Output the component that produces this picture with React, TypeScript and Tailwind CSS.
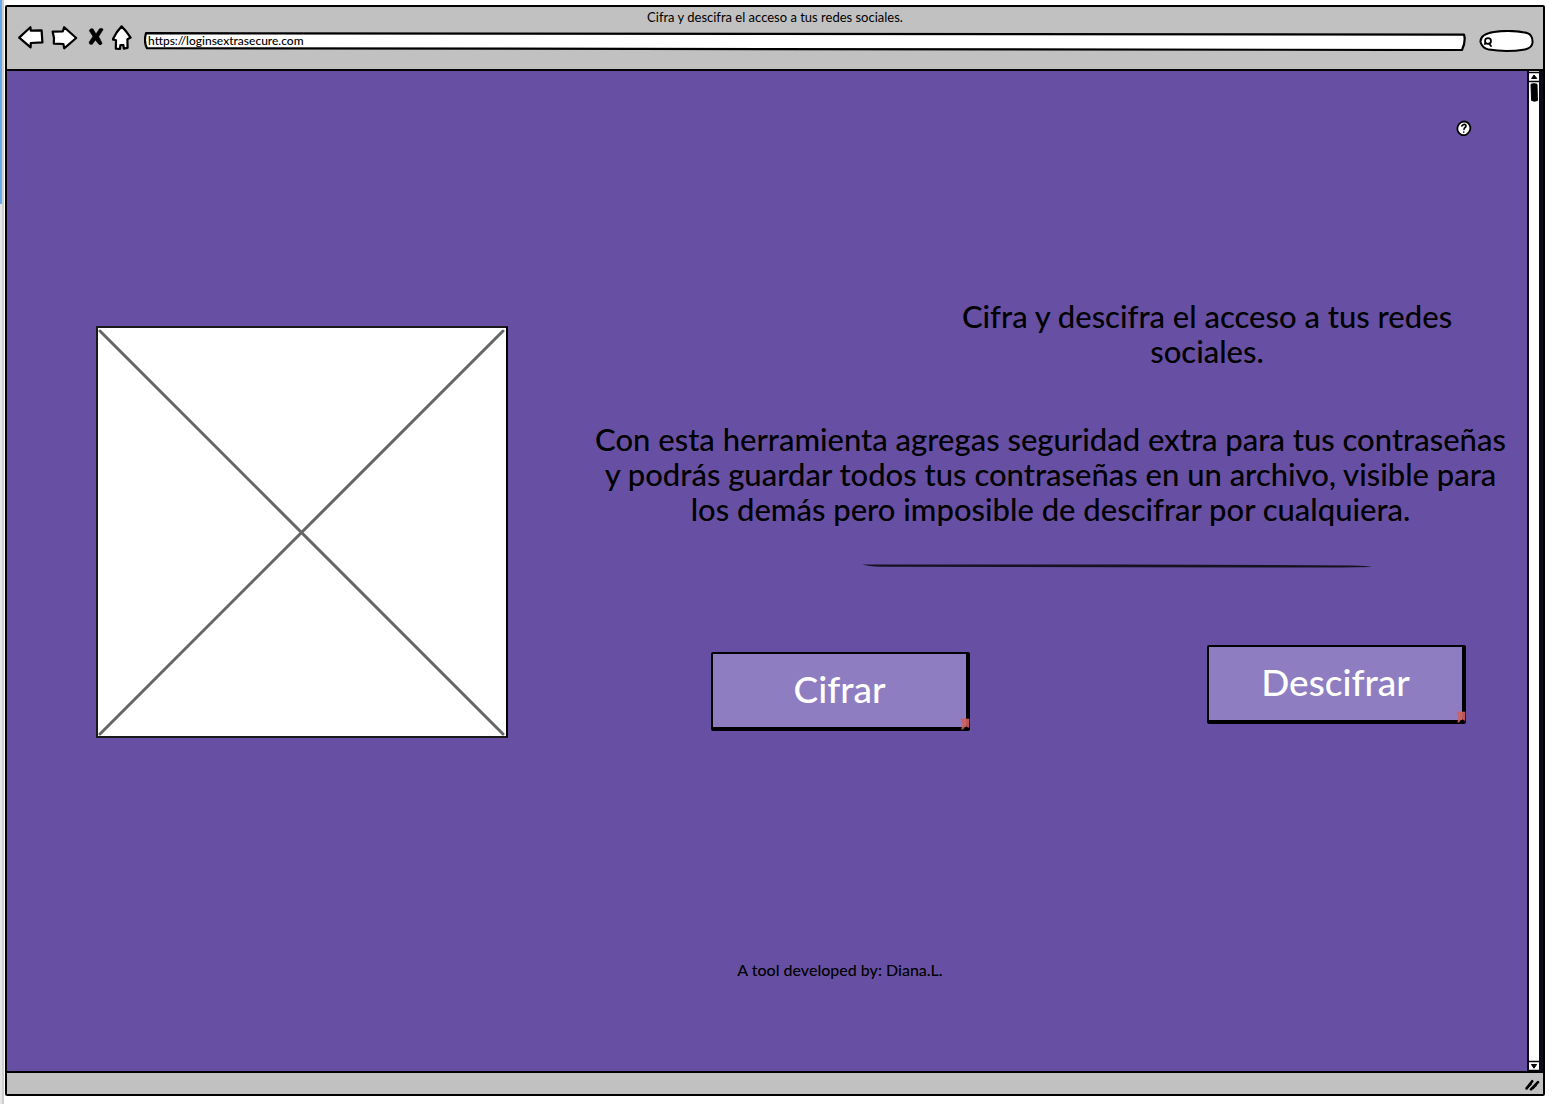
import type { ReactNode } from "react";

function SketchIcon({ label, width, children }: { label: string; width: number; children: ReactNode }) {
  return (
    <button type="button" aria-label={label} className="block shrink-0">
      <svg
        width={width}
        height="28"
        viewBox={`0 0 ${width} 28`}
        fill="white"
        stroke="black"
        strokeWidth="2.2"
        strokeLinejoin="round"
        strokeLinecap="round"
      >
        {children}
      </svg>
    </button>
  );
}

function Toolbar() {
  return (
    <header className="border-b-2 border-black bg-[#c1c1c1] pb-4">
      <h1 className="pt-[2px] text-center text-[13px] leading-[16px]">
        Cifra y descifra el acceso a tus redes sociales.
      </h1>
      <div className="flex h-7 items-center pr-[9px] pl-[11px]">
        <nav aria-label="Navegación" className="flex">
          <SketchIcon label="Atrás" width={32}>
            <path d="M1.2 12.6 12.4 2.2 12.8 5.6 23.6 5.4 24.4 17.4 12.8 18 12.6 22.4Z" />
          </SketchIcon>
          <SketchIcon label="Adelante" width={38}>
            <path d="M2.6 6.6 12.8 6.4 14.2 2.2 26.2 13 14.2 23.4 13.4 19 3.8 18.6 4 13Z" />
          </SketchIcon>
          <SketchIcon label="Detener" width={24}>
            <path
              d="M1.2 5.6Q2.4 2.8 5 3.8L8 8.8 11.4 3.8Q14.2 2.4 15.2 4.6L10.8 11.6 14.2 18.2Q13 20.8 11 19.4L7.4 15.2 4.2 19.4Q1 20.2 1 17.2L4.8 11.4Z"
              fill="black"
              strokeWidth="0.4"
            />
          </SketchIcon>
          <SketchIcon label="Inicio" width={32}>
            <path d="M9.6 1.4Q14 5.6 18.6 12.6L15.4 14.2 15.6 22.8 11.8 23.6 11.4 20.2 8.4 20 8 24 3.8 23.6 4 15.2 .8 14.4Q4.4 6.6 9.6 1.4Z" />
          </SketchIcon>
        </nav>
        <div className="relative mt-1 h-5 min-w-0 flex-1">
          <svg
            viewBox="0 0 1322 20"
            preserveAspectRatio="none"
            className="absolute inset-0 h-full w-full"
            fill="white"
            stroke="black"
            strokeWidth="2.2"
            strokeLinejoin="round"
            aria-hidden="true"
          >
            <path d="M2 2.2Q660 1.4 1320 3.6 1322 10 1318 19 660 19 3 17.2 -.5 11 2 2.2Z" />
          </svg>
          <input
            type="text"
            aria-label="Dirección"
            defaultValue="https://loginsextrasecure.com"
            className="relative block h-[18px] w-full bg-transparent px-1 text-[12px] leading-[14px] font-medium outline-none"
          />
        </div>
        <div className="relative mt-1 ml-[13px] h-[22px] w-[55px] shrink-0">
          <svg
            width="55"
            height="22"
            viewBox="0 0 55 22"
            className="absolute inset-0"
            fill="white"
            stroke="black"
            strokeWidth="2"
            strokeLinecap="round"
            aria-hidden="true"
          >
            <path d="M1.5 12Q1 4 15 2 32 -.6 48 3 53.6 4.6 53.6 12 53.4 18 46 19.4 28 22.4 10 19.6 3 18 1.5 12Z" />
            <ellipse cx="9" cy="11" rx="3" ry="2.9" strokeWidth="1.8" />
            <path d="M10 13.4 12 16M6.8 13.2 5.8 14" strokeWidth="1.8" />
          </svg>
          <input
            type="search"
            aria-label="Buscar"
            className="relative block h-full w-full bg-transparent pr-2 pl-4 text-[12px] outline-none"
          />
        </div>
      </div>
    </header>
  );
}

function Placeholder() {
  return (
    <svg viewBox="0 0 412 412" className="block w-full" role="img" aria-label="Imagen">
      <rect x="1" y="1" width="410" height="410" fill="white" stroke="#1a1a1a" strokeWidth="2" />
      <path d="M411 1V411" stroke="black" strokeWidth="2" />
      <path d="M4 5 407 408M407 5 4 408" stroke="#666" strokeWidth="3" strokeLinecap="round" />
    </svg>
  );
}

function ActionButton({ children, place }: { children: ReactNode; place: string }) {
  return (
    <button
      type="button"
      className={`relative h-[79px] w-[259px] rounded-[2px] border-2 border-r-4 border-b-4 border-black bg-[#8f7dc1] pb-[3px] text-[37px] leading-[48px] font-medium text-white ${place}`}
    >
      {children}
      <svg
        width="10"
        height="12"
        viewBox="0 0 10 12"
        className="absolute -right-[4px] -bottom-[3px]"
        fill="#d0605e"
        fillOpacity="0.9"
        aria-hidden="true"
      >
        <path d="M.4 .6 9.4 .8 9.2 10 6.2 8.2Q4 9.2 3.2 11.6L1.4 11.4 2.4 5.4Z" />
      </svg>
    </button>
  );
}

function Scrollbar() {
  return (
    <div aria-hidden="true" className="flex w-[16px] shrink-0 flex-col border-r-4 border-l-2 border-[#0d0b18] bg-white">
      <svg width="10" height="32" viewBox="0 0 10 32" stroke="black">
        <path d="M0 1.5H10M0 10.5H10" strokeWidth="1.6" />
        <path d="M2.6 7.5 5 4 7.8 7.5Z" />
        <path d="M2 13.2Q5 12.2 8 13.2L8.4 29.6Q5 30.8 2.6 29.4Z" />
      </svg>
      <svg width="10" height="12" viewBox="0 0 10 12" className="mt-auto" stroke="black">
        <path d="M0 2.5H10M0 11.5H10" strokeWidth="1.6" />
        <path d="M2.4 5.5H7.6L5 9.2Z" />
      </svg>
    </div>
  );
}

export default function App() {
  return (
    <div className="flex min-h-screen bg-white font-['Lato',sans-serif] text-black">
      <div aria-hidden="true" className="flex w-[5px] shrink-0">
        <div className="flex w-[2px] flex-col bg-[#e6e6e6]">
          <div className="h-[204px] bg-[#67aaea]" />
        </div>
        <div className="w-[2px] bg-[#cfcfcf]" />
      </div>
      <div className="mt-[5px] mr-[11px] mb-2 flex flex-1 flex-col rounded-[2px] border-2 border-black">
        <Toolbar />
        <div className="flex flex-1">
          <main className="flex min-w-0 flex-1 flex-col bg-[#6750a4]">
            <div className="flex justify-end pt-[49px] pr-[55px]">
              <button type="button" aria-label="Ayuda" className="block">
                <svg width="16" height="16" viewBox="0 0 16 16" fill="white" stroke="black" strokeLinecap="round">
                  <ellipse cx="8" cy="8.4" rx="6.4" ry="6.9" strokeWidth="1.8" transform="rotate(20 8 8)" />
                  <path d="M5.8 6Q7.8 3.4 9.8 5 10.6 6.8 8.4 8L8 9.4M7.8 12V12.1" fill="none" strokeWidth="1.6" />
                </svg>
              </button>
            </div>
            <div className="flex items-start pt-[163px] pr-[19px] pl-[89px]">
              <div className="w-[412px] shrink-0 pt-[27px]">
                <Placeholder />
              </div>
              <section className="min-w-0 flex-1 pl-[85px]">
                <h2 className="mr-[44px] ml-auto w-[514px] text-center text-[31px] leading-[35px] font-medium">
                  Cifra y descifra el acceso a tus redes sociales.
                </h2>
                <p className="mt-[53px] text-center text-[31px] leading-[35px] font-medium">
                  <span className="block">Con esta herramienta agregas seguridad extra para tus contraseñas</span>
                  <span className="block">y podrás guardar todos tus contraseñas en un archivo, visible para</span>
                  <span className="block">los demás pero imposible de descifrar por cualquiera.</span>
                </p>
                <svg viewBox="0 0 510 4" className="mt-[37px] mr-[136px] ml-auto block w-[510px]" aria-hidden="true">
                  <path d="M0 .6 255 .5 490 1.4Q505 1.6 510 3L480 3.6 255 3.2 20 2.8Q6 2.4 0 .6Z" fill="#17121f" />
                </svg>
                <div className="mt-[77px] flex h-[86px] justify-between pr-[42px] pl-[118px]">
                  <ActionButton place="self-end">Cifrar</ActionButton>
                  <ActionButton place="self-start">Descifrar</ActionButton>
                </div>
              </section>
            </div>
            <p className="mt-auto pr-[94px] pb-[91px] pl-[240px] text-center text-[16px] leading-[20px] font-medium">
              A tool developed by: Diana.L.
            </p>
          </main>
          <Scrollbar />
        </div>
        <footer className="flex h-[23px] items-center justify-end border-t-2 border-black bg-[#c1c1c1] pr-[3px]">
          <svg
            width="15"
            height="14"
            viewBox="0 0 15 14"
            fill="none"
            stroke="black"
            strokeWidth="2.6"
            strokeLinecap="round"
            aria-hidden="true"
          >
            <path d="M1.6 11.4 7.2 4.2M6 12.4 13 5.2" />
            <path d="M2.8 10.2 6 7M8 11.4 11 8.4" strokeWidth="1.8" />
          </svg>
        </footer>
      </div>
    </div>
  );
}
